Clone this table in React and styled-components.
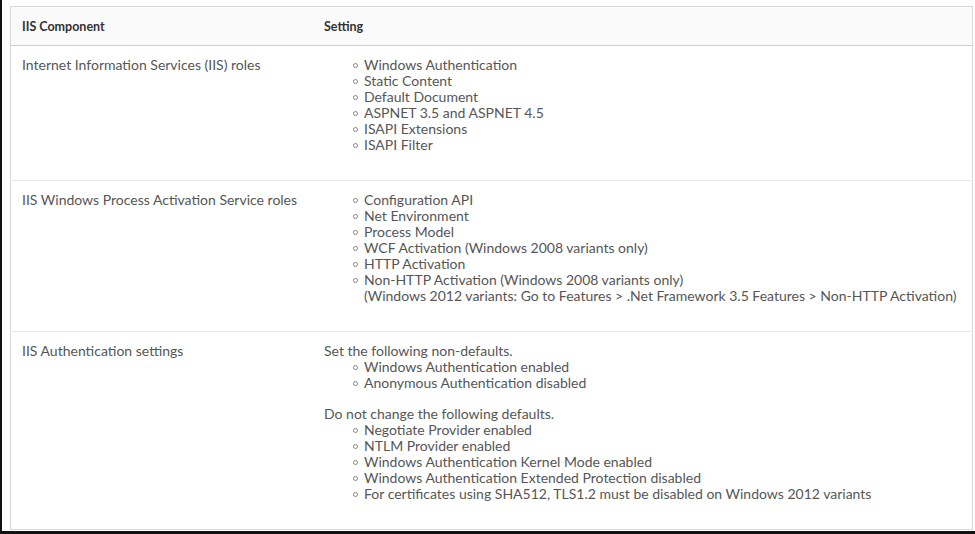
import styled, { createGlobalStyle } from 'styled-components';

const GlobalStyle = createGlobalStyle`
  html, body {
    margin: 0;
    padding: 0;
    background: #fff;
  }
  body {
    font-family: Lato, "Open Sans", sans-serif;
  }
`;

const rows = [
  {
    component: 'Internet Information Services (IIS) roles',
    groups: [
      {
        items: [
          'Windows Authentication',
          'Static Content',
          'Default Document',
          'ASPNET 3.5 and ASPNET 4.5',
          'ISAPI Extensions',
          'ISAPI Filter',
        ],
      },
    ],
  },
  {
    component: 'IIS Windows Process Activation Service roles',
    groups: [
      {
        items: [
          'Configuration API',
          'Net Environment',
          'Process Model',
          'WCF Activation (Windows 2008 variants only)',
          'HTTP Activation',
          'Non-HTTP Activation (Windows 2008 variants only)\n(Windows 2012 variants: Go to Features > .Net Framework 3.5 Features > Non-HTTP Activation)',
        ],
      },
    ],
  },
  {
    component: 'IIS Authentication settings',
    groups: [
      {
        title: 'Set the following non-defaults.',
        items: ['Windows Authentication enabled', 'Anonymous Authentication disabled'],
      },
      {
        title: 'Do not change the following defaults.',
        items: [
          'Negotiate Provider enabled',
          'NTLM Provider enabled',
          'Windows Authentication Kernel Mode enabled',
          'Windows Authentication Extended Protection disabled',
          'For certificates using SHA512, TLS1.2 must be disabled on Windows 2012 variants',
        ],
      },
    ],
  },
];

const App = () => {
  return (
    <Frame>
      <GlobalStyle />
      <Table>
        <thead>
          <tr>
            <Th $first>IIS Component</Th>
            <Th>Setting</Th>
          </tr>
        </thead>
        <tbody>
          {rows.map((row) => (
            <Row key={row.component}>
              <Td $first>{row.component}</Td>
              <Td>
                {row.groups.map((g, i) => (
                  <Group key={i}>
                    {g.title && <GroupTitle>{g.title}</GroupTitle>}
                    <List>
                      {g.items.map((item) => (
                        <Item key={item}>{item}</Item>
                      ))}
                    </List>
                  </Group>
                ))}
              </Td>
            </Row>
          ))}
        </tbody>
      </Table>
    </Frame>
  );
};

const Frame = styled.div`
  box-sizing: border-box;
  width: 975px;
  height: 534px;
  padding: 6px 2px 0 8px;
  border-left: 2px solid #111;
  border-bottom: 3px solid #111;
  overflow: hidden;
`;

const Table = styled.table`
  width: 963px;
  border-collapse: collapse;
  border: 1px solid #d7d7d7;
  table-layout: fixed;
  color: #565656;
  font-size: 14px;
  line-height: 16px;
`;

const Th = styled.th`
  width: ${(p) => (p.$first ? '280px' : 'auto')};
  text-align: left;
  background: #fafafa;
  color: #333;
  font-size: 12.5px;
  font-weight: 700;
  padding: 12px 11px 10px;
  line-height: 16px;
  border-bottom: 1px solid #cfcfcf;
`;

const Row = styled.tr`
  & + & td {
    border-top: 1px solid #e8e8e8;
  }
`;

const Td = styled.td`
  vertical-align: top;
  padding: 11px 11px 27px;
`;

const Group = styled.div`
  & + & {
    margin-top: 15px;
  }
`;

const GroupTitle = styled.div``;

const List = styled.ul`
  margin: 0;
  padding: 0 0 0 28px;
  list-style: none;
`;

const Item = styled.li`
  position: relative;
  padding-left: 12px;
  white-space: pre-line;

  &::before {
    content: '';
    position: absolute;
    left: 1px;
    top: 6px;
    width: 3px;
    height: 3px;
    border: 1px solid #888;
    border-radius: 50%;
  }
`;

export default App;
